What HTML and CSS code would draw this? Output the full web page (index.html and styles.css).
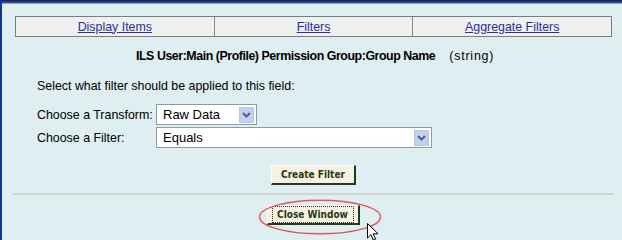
FILE: index.html
```html
<!DOCTYPE html>
<html>
<head>
<meta charset="utf-8">
<link rel="stylesheet" href="styles.css">
</head>
<body>
<div class="frame">
  <div class="topbar"></div>
  <div class="content">
    <div class="tabs">
      <div class="tab"><a href="#">Display Items</a></div>
      <div class="tab"><a href="#">Filters</a></div>
      <div class="tab"><a href="#">Aggregate Filters</a></div>
    </div>
    <div class="title"><b>ILS User:Main (Profile) Permission Group:Group Name</b><span class="type">(string)</span></div>
    <div class="intro">Select what filter should be applied to this field:</div>
    <div class="form">
      <div class="label">Choose a Transform:</div>
      <div class="select small"><span class="value">Raw Data</span><span class="arrow"><svg width="9" height="6" viewBox="0 0 9 6"><path d="M1 1 L4.5 4.5 L8 1" fill="none" stroke="#4d6185" stroke-width="2"/></svg></span></div>
      <div class="label">Choose a Filter:</div>
      <div class="select large"><span class="value">Equals</span><span class="arrow"><svg width="9" height="6" viewBox="0 0 9 6"><path d="M1 1 L4.5 4.5 L8 1" fill="none" stroke="#4d6185" stroke-width="2"/></svg></span></div>
    </div>
    <div class="actions first"><button class="btn">Create Filter</button></div>
    <div class="rule"></div>
    <div class="actions second">
      <div class="hl">
        <button class="btn focus"><span class="focusrect">Close Window</span></button>
        <svg class="ellipse" width="124" height="36" viewBox="0 0 124 36"><ellipse cx="62" cy="18" rx="60.5" ry="16.8" fill="none" stroke="#e0565c" stroke-width="1.5"/></svg>
        <svg class="cursor" width="14" height="20" viewBox="0 0 14 20"><path d="M1.5 1.5 L1.5 16 L5 12.6 L7.4 18.2 L9.6 17.2 L7.2 11.8 L12 11.8 Z" fill="#fff" stroke="#000" stroke-width="1"/></svg>
      </div>
    </div>
  </div>
</div>
</body>
</html>
```
FILE: styles.css
```css
html, body {
  margin: 0;
  padding: 0;
  background: #dfeef0;
}
.frame {
  width: 622px;
  height: 240px;
  overflow: hidden;
  border-left: 2px solid #13329a;
  box-sizing: border-box;
  background: #dfeef0;
  font-family: "Liberation Sans", Arial, sans-serif;
  font-size: 12.4px;
  color: #000;
}
.topbar {
  height: 4px;
  background: linear-gradient(#0c1a55, #34548f 70%, #cfe3ea);
}
.content {
  padding: 12px 10px 0 13px;
}
.tabs {
  display: flex;
  width: 597px;
  height: 21px;
  box-sizing: border-box;
  border: 1px solid #7c7c7c;
  background: #eff1f1;
}
.tab {
  flex: 1;
  display: flex;
  align-items: center;
  justify-content: center;
  border-left: 1px solid #8a8a8a;
}
.tab:first-child {
  border-left: none;
}
.tab a {
  color: #2d2d9a;
  text-decoration: underline;
}
.title {
  margin-top: 11px;
  padding-left: 121px;
  height: 16px;
  line-height: 16px;
}
.title b {
  font-weight: bold;
  letter-spacing: -0.45px;
}
.type {
  margin-left: 14px;
  letter-spacing: 0.8px;
}
.intro {
  margin-top: 14px;
  padding-left: 22px;
  line-height: 16px;
}
.form {
  margin-top: 10px;
  display: grid;
  grid-template-columns: 119px auto;
  row-gap: 2px;
  padding-left: 22px;
  align-items: center;
}
.label {
  white-space: nowrap;
}
.select {
  height: 21px;
  box-sizing: border-box;
  border: 1px solid #8e9aa6;
  background: #fff;
  display: flex;
  align-items: center;
  justify-content: space-between;
  padding: 0 2px 0 6px;
  font-size: 13px;
}
.select.small {
  width: 101px;
}
.select.large {
  width: 276px;
}
.arrow {
  width: 15px;
  height: 16px;
  background: #c4d0f2;
  border: 1px solid #b8c6ea;
  box-sizing: border-box;
  display: flex;
  align-items: center;
  justify-content: center;
}
.actions {
  display: flex;
  justify-content: center;
  width: 597px;
}
.actions.first {
  margin-top: 17px;
}
.btn {
  font-family: "DejaVu Sans Condensed", "DejaVu Sans", sans-serif;
  font-weight: bold;
  font-size: 10px;
  color: #1d3d10;
  background: #f6f1e2;
  border: 1px solid;
  border-color: #ffffff #233a1c #233a1c #ffffff;
  border-right-width: 2px;
  border-bottom-width: 2px;
  height: 20px;
  padding: 0 9px;
  margin: 0;
}
.rule {
  margin-top: 8px;
  margin-left: -3px;
  width: 602px;
  height: 2px;
  background: #cdd7d8;
}
.actions.second {
  margin-top: 10px;
}
.hl {
  position: relative;
}
.btn.focus {
  padding: 0 4px;
}
.focusrect {
  display: inline-block;
  border: 1px dotted #333;
  padding: 1px 5px 1px 4px;
  line-height: 13px;
}
.ellipse {
  position: absolute;
  left: -9px;
  top: -6px;
}
.cursor {
  position: absolute;
  left: 99px;
  top: 17px;
}
```
